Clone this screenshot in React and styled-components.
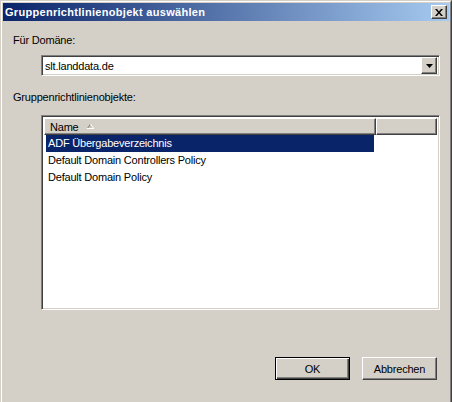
import React from "react";
import styled, { createGlobalStyle, css } from "styled-components";

const GlobalStyle = createGlobalStyle`
  html, body {
    margin: 0;
    padding: 0;
    background: #d4d0c8;
    overflow: hidden;
  }
  body {
    font-family: "Liberation Sans", Arial, sans-serif;
    font-size: 11px;
    letter-spacing: -0.2px;
    color: #000;
  }
`;

const sunken = css`
  border-style: solid;
  border-width: 1px;
  border-color: #808080 #ffffff #ffffff #808080;
  box-shadow: inset 1px 1px 0 #404040, inset -1px -1px 0 #d4d0c8;
`;

const raised = css`
  border-style: solid;
  border-width: 1px;
  border-color: #ffffff #404040 #404040 #ffffff;
  box-shadow: inset -1px -1px 0 #808080;
  background: #d4d0c8;
`;

const Window = styled.div`
  width: 452px;
  height: 410px;
  box-sizing: border-box;
  border: 1px solid;
  border-color: #d4d0c8 #404040 #404040 #d4d0c8;
`;

const Frame = styled.div`
  height: 100%;
  box-sizing: border-box;
  border: 1px solid;
  border-color: #ffffff #808080 #808080 #ffffff;
  padding: 1px;
  display: flex;
  flex-direction: column;
`;

const Caption = styled.div`
  height: 18px;
  display: flex;
  align-items: center;
  justify-content: space-between;
  background: linear-gradient(to right, #0a246a, #a6caf0);
  padding: 0 2px 0 2px;
`;

const Title = styled.span`
  color: #fff;
  font-weight: bold;
  font-size: 11px;
  letter-spacing: 0.3px;
`;

const CloseButton = styled.div`
  ${raised};
  width: 16px;
  height: 14px;
  box-sizing: border-box;
  display: flex;
  align-items: center;
  justify-content: center;
`;

const Client = styled.div`
  flex: 1;
  display: flex;
  flex-direction: column;
  padding: 13px 9px 0 10px;
`;

const Label = styled.div`
  line-height: 13px;
  height: 13px;
  margin-top: ${(p) => p.$top || 0}px;
`;

const Combo = styled.div`
  ${sunken};
  margin: ${(p) => p.$top}px 0 0 28px;
  height: 21px;
  box-sizing: border-box;
  background: #fff;
  display: flex;
  align-items: center;
  padding: 2px;
`;

const ComboText = styled.span`
  flex: 1;
  padding-left: 1px;
`;

const ComboButton = styled.div`
  ${raised};
  width: 16px;
  height: 17px;
  box-sizing: border-box;
  display: flex;
  align-items: center;
  justify-content: center;
`;

const ListView = styled.div`
  ${sunken};
  margin: 11px 0 0 28px;
  height: 195px;
  box-sizing: border-box;
  background: #fff;
  padding: 2px;
`;

const Header = styled.div`
  display: flex;
  height: 17px;
`;

const HeaderCell = styled.div`
  ${raised};
  width: ${(p) => p.$width}px;
  ${(p) => p.$grow && "flex: 1;"}
  box-sizing: border-box;
  display: flex;
  align-items: center;
  padding-left: 5px;
  gap: 8px;
`;

const Row = styled.div`
  height: 17px;
  display: flex;
  align-items: center;
  padding-left: 2px;
`;

const RowLabel = styled.div`
  width: 328px;
  height: 17px;
  line-height: 17px;
  box-sizing: border-box;
  padding-left: 2px;
  background: ${(p) => (p.$selected ? "#0a246a" : "transparent")};
  color: ${(p) => (p.$selected ? "#fff" : "#000")};
`;

const Footer = styled.div`
  display: flex;
  justify-content: flex-end;
  gap: 12px;
  margin-top: 47px;
  padding-right: 3px;
`;

const Button = styled.div`
  width: 75px;
  height: 23px;
  box-sizing: border-box;
  display: flex;
  align-items: center;
  justify-content: center;
  ${(p) =>
    p.$default
      ? css`
          border: 1px solid #000;
          background: #d4d0c8;
          box-shadow: inset 1px 1px 0 #fff, inset -1px -1px 0 #404040,
            inset -2px -2px 0 #808080;
        `
      : raised}
`;

const rows = [
  "ADF Übergabeverzeichnis",
  "Default Domain Controllers Policy",
  "Default Domain Policy",
];

export default function App() {
  return (
    <>
      <GlobalStyle />
      <Window>
        <Frame>
          <Caption>
            <Title>Gruppenrichtlinienobjekt auswählen</Title>
            <CloseButton>
              <svg width="8" height="7" viewBox="0 0 8 7">
                <path d="M0 0h2l2 2.5L6 0h2L5 3.5 8 7H6L4 4.5 2 7H0l3-3.5z" fill="#000" />
              </svg>
            </CloseButton>
          </Caption>
          <Client>
            <Label>Für Domäne:</Label>
            <Combo $top={8}>
              <ComboText>slt.landdata.de</ComboText>
              <ComboButton>
                <svg width="7" height="4" viewBox="0 0 7 4">
                  <path d="M0 0h7L3.5 4z" fill="#000" />
                </svg>
              </ComboButton>
            </Combo>
            <Label $top={15}>Gruppenrichtlinienobjekte:</Label>
            <ListView>
              <Header>
                <HeaderCell $width={332}>
                  Name
                  <svg width="7" height="5" viewBox="0 0 7 5">
                    <path d="M3.5 0L7 5H0z" fill="#c8c4bc" />
                    <path d="M3.5 0L0 5" stroke="#808080" strokeWidth="1" />
                    <path d="M0 4.5h7M3.5 0L7 5" stroke="#fff" strokeWidth="1" />
                  </svg>
                </HeaderCell>
                <HeaderCell $grow />
              </Header>
              {rows.map((r, i) => (
                <Row key={r}>
                  <RowLabel $selected={i === 0}>{r}</RowLabel>
                </Row>
              ))}
            </ListView>
            <Footer>
              <Button $default>OK</Button>
              <Button>Abbrechen</Button>
            </Footer>
          </Client>
        </Frame>
      </Window>
    </>
  );
}
